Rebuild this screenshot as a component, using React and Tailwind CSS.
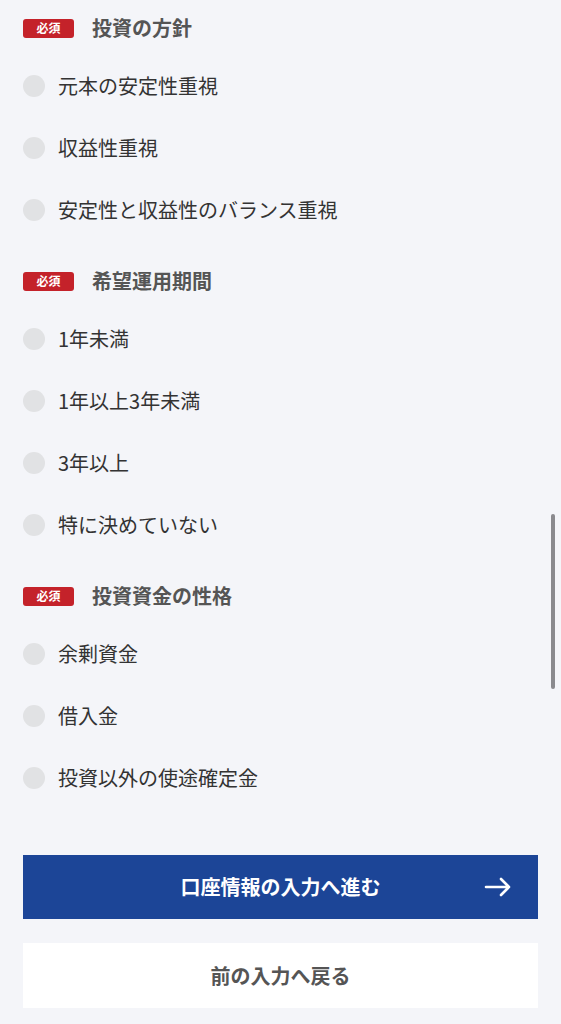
import React from "react";

const sections = [
  {
    title: "投資の方針",
    options: ["元本の安定性重視", "収益性重視", "安定性と収益性のバランス重視"],
  },
  {
    title: "希望運用期間",
    options: ["1年未満", "1年以上3年未満", "3年以上", "特に決めていない"],
  },
  {
    title: "投資資金の性格",
    options: ["余剰資金", "借入金", "投資以外の使途確定金"],
  },
];

function Section({ title, options, first }) {
  return (
    <div className={first ? "" : "mt-[28px]"}>
      <div className="flex items-center h-6">
        <span className="w-[51px] h-[19px] rounded-[3px] bg-[#c4222a] text-white text-[12px] font-bold flex items-center justify-center leading-none">
          必須
        </span>
        <span className="ml-[18px] text-[20px] font-bold text-[#555]">{title}</span>
      </div>
      <div className="mt-[15px]">
        {options.map((opt) => (
          <label key={opt} className="flex items-center h-[62px] cursor-pointer">
            <span className="w-[22px] h-[22px] rounded-full bg-[#e1e2e4] shrink-0" />
            <span className="ml-[13px] text-[20px] text-[#333]">{opt}</span>
          </label>
        ))}
      </div>
    </div>
  );
}

export default function App() {
  return (
    <div
      className="relative min-h-screen bg-[#f4f5f9] px-[23px] pt-4 pb-4"
      style={{ fontFamily: '"Noto Sans CJK JP", "Noto Sans", sans-serif' }}
    >
      {sections.map((s, i) => (
        <Section key={s.title} {...s} first={i === 0} />
      ))}

      <button className="mt-[46px] w-[515px] h-[64px] bg-[#1c4597] text-white text-[20px] font-bold flex items-center justify-center relative">
        口座情報の入力へ進む
        <svg
          className="absolute right-[26px] top-1/2 -translate-y-1/2"
          width="28"
          height="20"
          viewBox="0 0 28 20"
          fill="none"
          stroke="white"
          strokeWidth="2.6"
          strokeLinecap="round"
          strokeLinejoin="round"
        >
          <path d="M2 10h23M17 2l8 8-8 8" />
        </svg>
      </button>

      <button className="mt-6 w-[515px] h-[65px] bg-white text-[#555] text-[20px] font-bold flex items-center justify-center">
        前の入力へ戻る
      </button>

      <div className="absolute right-[6px] top-[514px] w-[4px] h-[175px] rounded-full bg-[#8a8a8e]" />
    </div>
  );
}
